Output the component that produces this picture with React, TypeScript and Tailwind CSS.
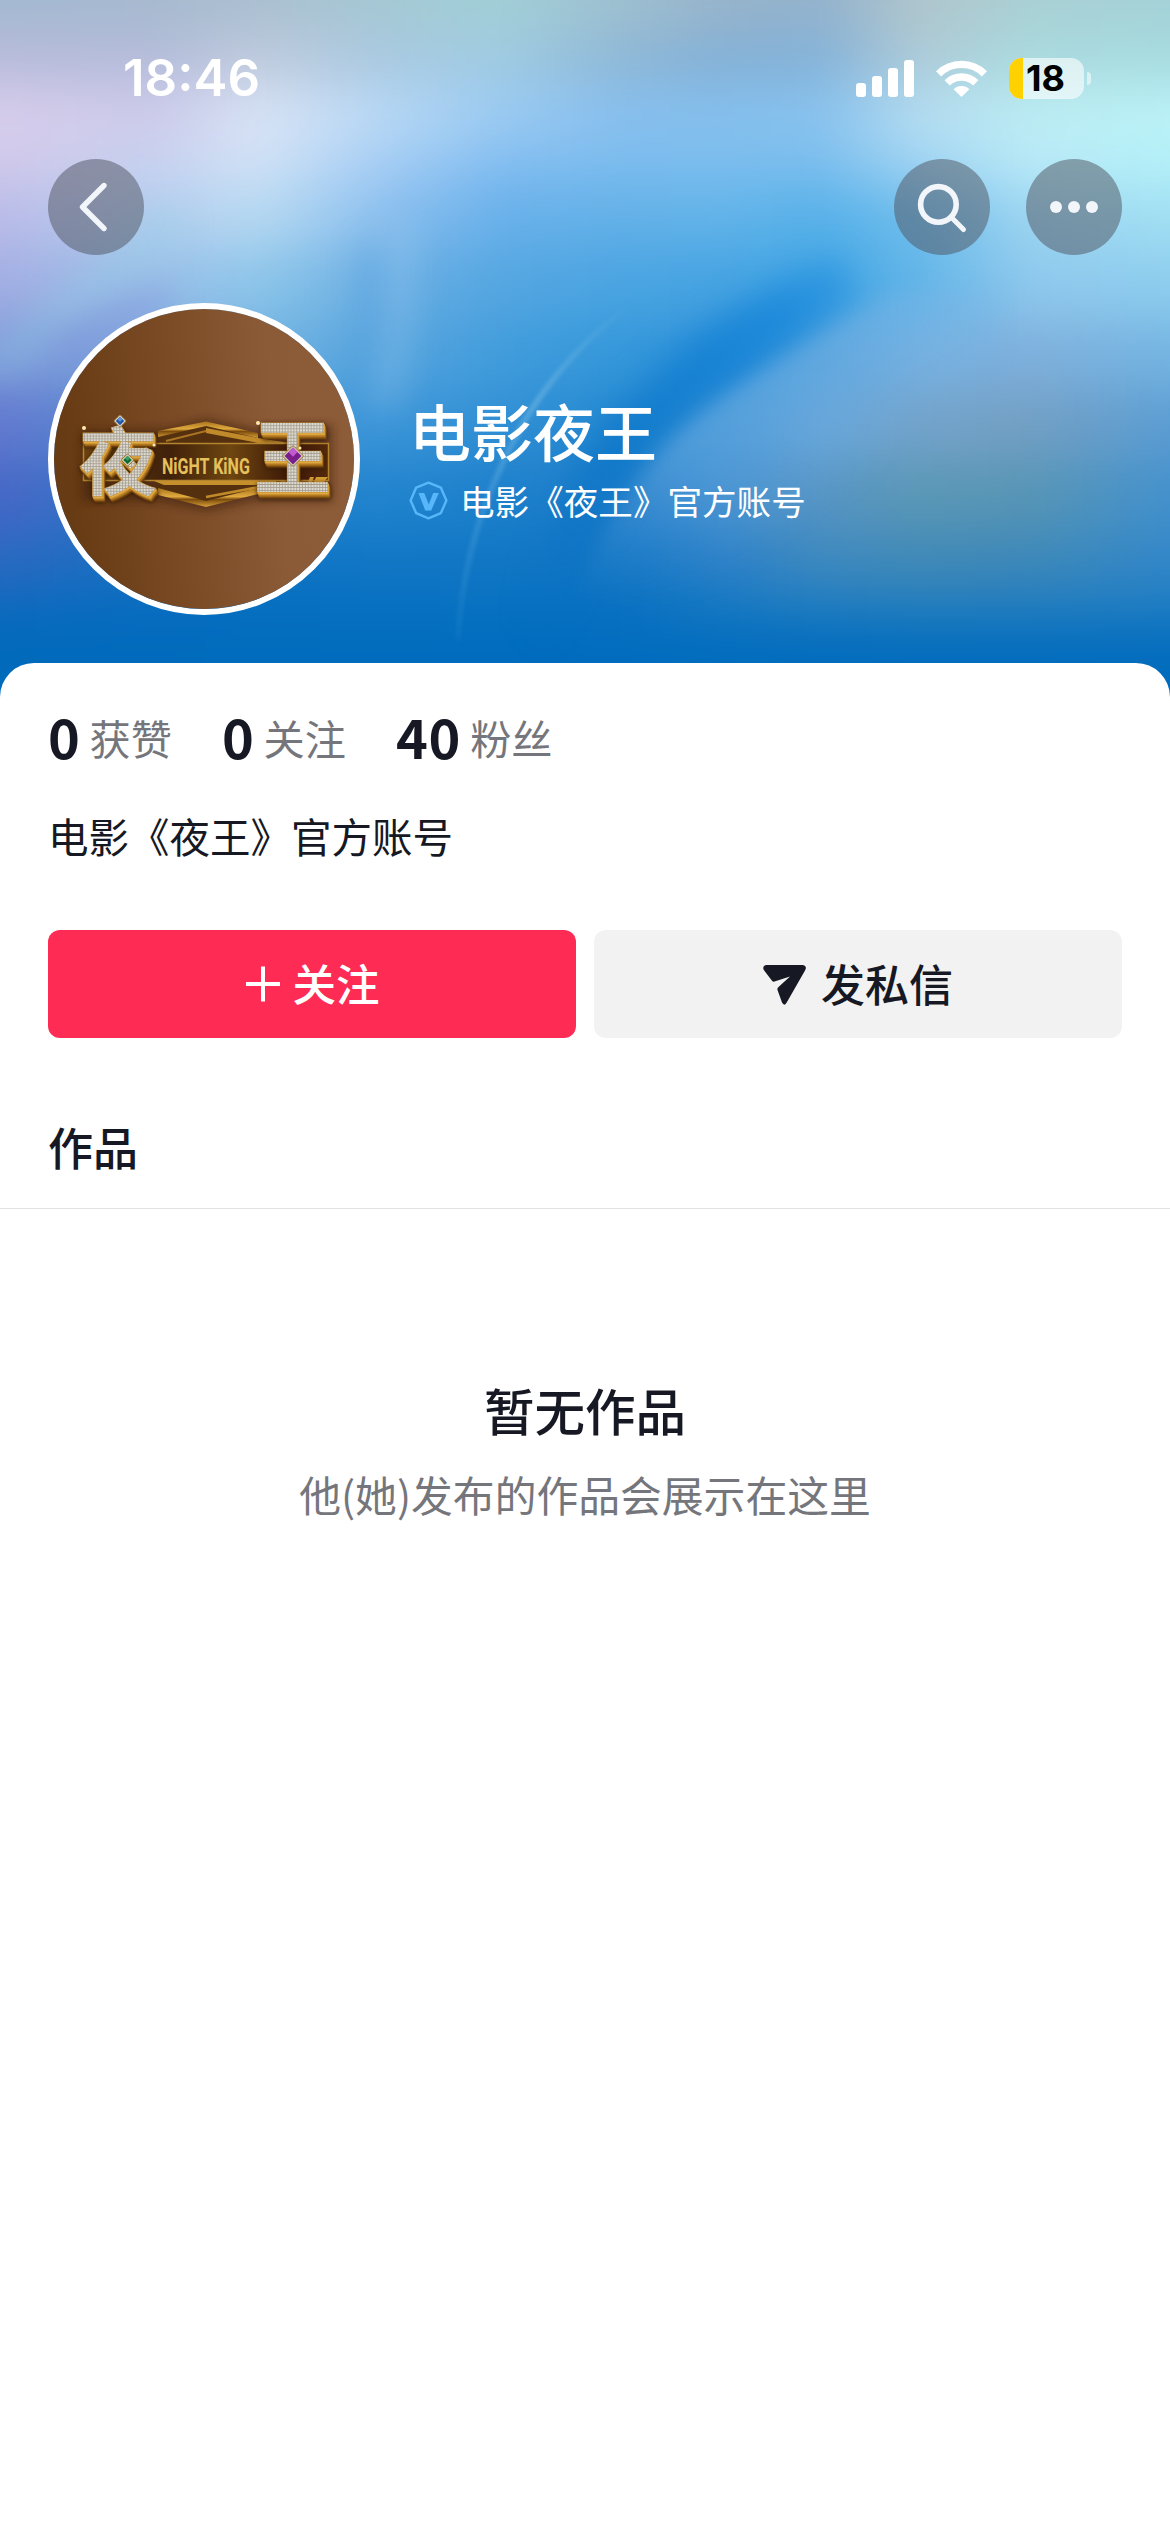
import type { ReactNode } from 'react'

type Stat = { value: string; label: string; width: string }

const STATS: Stat[] = [
  { value: '0', label: '获赞', width: 'w-[174px]' },
  { value: '0', label: '关注', width: 'w-[174px]' },
  { value: '40', label: '粉丝', width: 'w-[200px]' },
]

// Colour bands of the cover: every row is a horizontal gradient, blurred vertically into the next
const COVER_STOPS = [0, 150, 260, 380, 500, 620, 720, 820, 920, 1030, 1170]

const COVER_ROWS: { y: number; h: number; colors: string[] }[] = [
  { y: -150, h: 180, colors: ['#a3b9d2', '#a6b9cf', '#aabfd0', '#a5c8d3', '#a0cfd6', '#9fc0d0', '#98b4cb', '#93b2cc', '#b0c5cc', '#a9d0d4', '#a4d1d7'] },
  { y: 30, h: 55, colors: ['#b7bbda', '#b4bcda', '#bfcadd', '#a9c9e0', '#a0cbe2', '#8fb8d6', '#84b0d6', '#84b2d8', '#aecbd8', '#a9dade', '#a6dbe0'] },
  { y: 85, h: 60, colors: ['#d8cdec', '#cdcaea', '#d8e3f5', '#b8d8f5', '#9acaf2', '#87bfee', '#84bfed', '#88c2ee', '#b4dcf1', '#bcecf3', '#bbf2f7'] },
  { y: 145, h: 45, colors: ['#cfc8ea', '#c6d2f0', '#cfe2f6', '#a4ccf4', '#80bcf0', '#7abcee', '#7abdee', '#78bdee', '#9fd3f3', '#b8e9f8', '#b3f0f8'] },
  { y: 190, h: 60, colors: ['#b9bbe8', '#b3cdee', '#b4d8f1', '#8bbfee', '#68b0ea', '#62b0e8', '#61b3e9', '#55b0e8', '#6dbdec', '#9dd4f0', '#a0dff3'] },
  { y: 250, h: 70, colors: ['#a2aee3', '#99bfe8', '#8cc5e9', '#6aaee3', '#54a6e1', '#4aa4e1', '#45a3e1', '#42a5e4', '#62b5e8', '#8fc8ed', '#8ecdee'] },
  { y: 320, h: 70, colors: ['#7f99da', '#7aa6dd', '#6db0e0', '#57a5de', '#419cdb', '#3497da', '#2f92da', '#55a2dc', '#76b1e1', '#7fb0dc', '#74b4e2'] },
  { y: 390, h: 70, colors: ['#6279cf', '#5189d0', '#4596d6', '#3b95d8', '#318fd4', '#2388d1', '#3e93d5', '#65a5d9', '#74a3ca', '#739fc3', '#5b9dd3'] },
  { y: 460, h: 70, colors: ['#4667c6', '#2f78c8', '#2480cb', '#2284ce', '#1d80cb', '#1f7dca', '#4390d1', '#5795c4', '#5b97b5', '#5795b5', '#4391cd'] },
  { y: 530, h: 60, colors: ['#2a69c1', '#1670c1', '#0e74c4', '#1177c5', '#1177c5', '#1376c5', '#2c81c8', '#3d89bf', '#4089b7', '#3d88b9', '#3287c8'] },
  { y: 590, h: 45, colors: ['#0a6abd', '#066cbf', '#056ebf', '#066fc0', '#0670c0', '#0870c1', '#1176c1', '#1979c0', '#1c7abe', '#1c7abf', '#197ac2'] },
  { y: 635, h: 250, colors: ['#006abb', '#006abb', '#006bbc', '#006bbc', '#006bbd', '#006bbd', '#006bbd', '#006bbd', '#006bbd', '#006bbd', '#006bbd'] },
]

function Cover() {
  return (
    <svg
      className="absolute left-0 top-0 h-[720px] w-[1170px]"
      viewBox="0 0 1170 720"
      preserveAspectRatio="none"
      aria-hidden="true"
    >
      <defs>
        {COVER_ROWS.map((row, i) => (
          <linearGradient key={row.y} id={`row-${i}`} x1="0" x2="1170" y1="0" y2="0" gradientUnits="userSpaceOnUse">
            {row.colors.map((color, j) => (
              <stop key={j} offset={COVER_STOPS[j] / 1170} stopColor={color} />
            ))}
          </linearGradient>
        ))}
        <filter id="rows-blur" x="-200" y="-200" width="1570" height="1120" filterUnits="userSpaceOnUse" colorInterpolationFilters="sRGB">
          <feGaussianBlur stdDeviation="20 24" />
        </filter>
        <filter id="soft" x="-200" y="-200" width="1600" height="1200" filterUnits="userSpaceOnUse" colorInterpolationFilters="sRGB">
          <feGaussianBlur stdDeviation="16" />
        </filter>
        <filter id="edge" x="-200" y="-200" width="1600" height="1200" filterUnits="userSpaceOnUse" colorInterpolationFilters="sRGB">
          <feGaussianBlur stdDeviation="9" />
        </filter>
        <filter id="streak" x="-200" y="-200" width="1600" height="1200" filterUnits="userSpaceOnUse" colorInterpolationFilters="sRGB">
          <feGaussianBlur stdDeviation="2" />
        </filter>
        <linearGradient id="band" x1="850" y1="240" x2="530" y2="640" gradientUnits="userSpaceOnUse">
          <stop offset="0" stopColor="#2390e0" stopOpacity="0.3" />
          <stop offset="0.2" stopColor="#1a88da" stopOpacity="0.9" />
          <stop offset="0.6" stopColor="#0c76c8" stopOpacity="0.85" />
          <stop offset="1" stopColor="#006bbd" stopOpacity="0" />
        </linearGradient>
        <linearGradient id="lobe" x1="700" y1="420" x2="800" y2="540" gradientUnits="userSpaceOnUse">
          <stop offset="0" stopColor="#79b4e6" stopOpacity="0.42" />
          <stop offset="1" stopColor="#79b4e6" stopOpacity="0" />
        </linearGradient>
        <linearGradient id="lobe-fade" x1="0" y1="440" x2="0" y2="610" gradientUnits="userSpaceOnUse">
          <stop offset="0" stopColor="#fff" />
          <stop offset="1" stopColor="#fff" stopOpacity="0" />
        </linearGradient>
        <mask id="lobe-mask" maskUnits="userSpaceOnUse" x="0" y="0" width="1170" height="720">
          <rect width="1170" height="720" fill="url(#lobe-fade)" />
        </mask>
        <linearGradient id="ray" x1="630" y1="300" x2="460" y2="640" gradientUnits="userSpaceOnUse">
          <stop offset="0" stopColor="#7fc0e6" stopOpacity="0" />
          <stop offset="0.35" stopColor="#7fc0e6" stopOpacity="0.55" />
          <stop offset="1" stopColor="#5fb0e6" stopOpacity="0.1" />
        </linearGradient>
      </defs>
      <g filter="url(#rows-blur)">
        {COVER_ROWS.map((row, i) => (
          <rect key={row.y} x="-150" y={row.y} width="1470" height={row.h} fill={`url(#row-${i})`} />
        ))}
      </g>
      <path
        d="M840 255C765 285 695 330 640 390C575 455 540 540 520 650L550 650C570 570 600 510 650 450C710 395 790 350 860 295Z"
        fill="url(#band)"
        filter="url(#soft)"
      />
      <g mask="url(#lobe-mask)">
        <path
          d="M900 290C800 350 720 390 668 445C615 505 580 570 565 650L1000 650L1000 290Z"
          fill="url(#lobe)"
          filter="url(#edge)"
        />
      </g>
      <path
        d="M630 305C590 335 555 370 525 420C485 490 462 560 458 640"
        fill="none"
        stroke="url(#ray)"
        strokeWidth="5"
        filter="url(#streak)"
      />
      <g filter="url(#soft)" fill="none" strokeLinecap="round">
        <path d="M370 250C370 300 364 350 350 390" stroke="#3f93da" strokeOpacity="0.35" strokeWidth="16" />
        <path d="M402 240C404 300 398 350 386 400" stroke="#b0d4f2" strokeOpacity="0.25" strokeWidth="28" />
        <path d="M0 360C60 320 120 270 165 225" stroke="#8fd0e6" strokeOpacity="0.3" strokeWidth="36" />
        <path d="M60 350C90 328 120 310 160 300" stroke="#7d86d8" strokeOpacity="0.4" strokeWidth="26" />
      </g>
    </svg>
  )
}

function StatusBar() {
  return (
    <div className="flex h-[159px] items-start justify-between pl-[123px] pr-[79px] pt-[48px]">
      <span className="font-['Inter',sans-serif] text-[51px] font-semibold leading-[60px] text-white">
        18:46
      </span>
      <div className="flex h-[60px] items-center">
        <svg className="h-[37px] w-[58px]" viewBox="0 0 58 37" fill="#fff" aria-hidden="true">
          <rect x="0" y="23" width="10" height="14" rx="3" />
          <rect x="16" y="16" width="10" height="21" rx="3" />
          <rect x="32" y="8" width="10" height="29" rx="3" />
          <rect x="48" y="0" width="10" height="37" rx="3" />
        </svg>
        <svg className="ml-[22px] h-[37px] w-[51px]" viewBox="0 0 51 37" aria-hidden="true">
          <g fill="none" stroke="#fff" strokeWidth="7.4">
            <path d="M2.6 13.8a32.5 32.5 0 0 1 45.8 0" />
            <path d="M11.2 22.8a20.6 20.6 0 0 1 28.6 0" />
          </g>
          <path d="M25.5 37L17.6 29.2a11.4 11.4 0 0 1 15.8 0Z" fill="#fff" />
        </svg>
        <div className="ml-[22px] flex h-[41px] w-[75px] items-center overflow-hidden rounded-[13px] bg-white/60">
          <div className="h-full w-[14px] bg-[#ffd100]" />
          <span className="ml-[3px] font-['Inter',sans-serif] text-[36px] font-bold leading-none text-black">
            18
          </span>
        </div>
        <div className="ml-[3px] h-[13px] w-[4px] rounded-r-full bg-white/55" />
      </div>
    </div>
  )
}

function RoundButton({ label, children }: { label: string; children: ReactNode }) {
  return (
    <button
      type="button"
      aria-label={label}
      className="flex size-24 items-center justify-center rounded-full bg-[#4e525e]/50"
    >
      <svg className="size-24" viewBox="0 0 96 96" fill="none" stroke="#f2f5fa" strokeLinecap="round" strokeLinejoin="round">
        {children}
      </svg>
    </button>
  )
}

function NavBar() {
  return (
    <nav className="flex items-center justify-between px-12">
      <RoundButton label="返回">
        <path d="M56 26.5L34.5 48L56 69.5" strokeWidth="5.4" />
      </RoundButton>
      <div className="flex gap-9">
        <RoundButton label="搜索">
          <circle cx="44.4" cy="45.4" r="17.8" strokeWidth="5.6" />
          <path d="M57.5 58.5L69.5 70.5" strokeWidth="5" />
        </RoundButton>
        <RoundButton label="更多">
          <g fill="#f2f5fa" stroke="none">
            <circle cx="30" cy="48" r="6" />
            <circle cx="48" cy="48" r="6" />
            <circle cx="66" cy="48" r="6" />
          </g>
        </RoundButton>
      </div>
    </nav>
  )
}

function Gem({ x, y, r, fill, light }: { x: number; y: number; r: number; fill: string; light: string }) {
  return (
    <g transform={`translate(${x} ${y}) rotate(45)`}>
      <rect x={-r} y={-r} width={r * 2} height={r * 2} rx="1" fill="#d9d2bd" stroke="#8d6420" strokeWidth="0.8" />
      <rect x={-r + 1.5} y={-r + 1.5} width={r * 2 - 3} height={r * 2 - 3} fill={fill} />
      <rect x={-r + 1.5} y={-r + 1.5} width={r - 1} height={r - 1} fill={light} />
    </g>
  )
}

// Studded silver face, the extrude filter adds the gold sides and the shadow
function LogoGlyph({ char, transform }: { char: string; transform: string }) {
  return (
    <text
      transform={transform}
      fontFamily="'Noto Sans CJK SC', sans-serif"
      fontWeight="700"
      fontSize="80"
      fill="url(#studs)"
      stroke="#c48f35"
      strokeWidth="1.2"
      paintOrder="stroke"
      filter="url(#extrude)"
    >
      {char}
    </text>
  )
}

function Avatar() {
  return (
    <div className="size-[312px] shrink-0 overflow-hidden rounded-full border-[6px] border-white">
      <svg className="size-full" viewBox="0 0 300 300" role="img" aria-label="夜王 Night King">
        <defs>
          <linearGradient id="wood" x1="0" y1="0.1" x2="1" y2="0">
            <stop offset="0" stopColor="#673b13" />
            <stop offset="0.35" stopColor="#7a4a25" />
            <stop offset="0.7" stopColor="#8b5a36" />
            <stop offset="1" stopColor="#8d5c38" />
          </linearGradient>
          <linearGradient id="gold" x1="0" y1="0" x2="0" y2="1">
            <stop offset="0" stopColor="#a8731c" />
            <stop offset="0.45" stopColor="#e0a93f" />
            <stop offset="0.6" stopColor="#7c4c0c" />
            <stop offset="1" stopColor="#d8a03a" />
          </linearGradient>
          <linearGradient id="plate" x1="0" y1="0" x2="1" y2="0">
            <stop offset="0" stopColor="#6b4312" />
            <stop offset="0.35" stopColor="#40210a" />
            <stop offset="0.6" stopColor="#6e4610" />
            <stop offset="0.85" stopColor="#3b1708" />
            <stop offset="1" stopColor="#552a0c" />
          </linearGradient>
          <pattern id="studs" width="3" height="3" patternUnits="userSpaceOnUse">
            <rect width="3" height="3" fill="#a39b8c" />
            <rect width="2.2" height="2.2" fill="#dedbd2" />
          </pattern>
          <filter id="logo-shadow" x="-10%" y="-20%" width="120%" height="140%">
            <feGaussianBlur stdDeviation="5" />
          </filter>
          <filter id="extrude" x="-20%" y="-20%" width="140%" height="140%" colorInterpolationFilters="sRGB">
            <feDropShadow dx="0.8" dy="1.8" stdDeviation="0" floodColor="#e3ac45" />
            <feDropShadow dx="1" dy="2.2" stdDeviation="0" floodColor="#b47a1f" />
            <feDropShadow dx="0.8" dy="1.8" stdDeviation="0" floodColor="#7a4a10" />
            <feDropShadow dx="0" dy="1" stdDeviation="2" floodColor="#2c1404" floodOpacity="0.8" />
          </filter>
        </defs>
        <rect width="300" height="300" fill="url(#wood)" />
        <path d="M28 122L110 120L152 110L200 120L278 116V192H200L152 202L105 192H28Z" fill="#3a1c08" opacity="0.55" filter="url(#logo-shadow)" />

        <path d="M104 124L152 113L206 127L236 136H100Z" fill="#54300f" />
        <path d="M104 182L152 198L206 182L236 172H100Z" fill="#54300f" />
        <path d="M104 122L152 112.5L204 124V129L152 117L104 128Z" fill="url(#gold)" />
        <path d="M152 119L204 129L236 134V136H215L152 124Z" fill="#c08a2a" />
        <path d="M152 122L112 132" stroke="#a87424" strokeWidth="2" />
        <path d="M104 179L152 192L204 179V185L152 198L104 186Z" fill="url(#gold)" />
        <path d="M152 188L232 173" stroke="#c08a2a" strokeWidth="2.5" />
        <rect x="29.5" y="134.5" width="245" height="37" fill="url(#plate)" stroke="#b5842f" strokeWidth="1.5" />
        <path d="M100 172H222V176H110Z" fill="#c58f2c" />
        <path d="M256 168L260 168L258 173H254ZM262 168H274L270 173H260Z" fill="#d29c35" />

        <text
          transform="translate(108 165) scale(0.73 1)"
          fontFamily="'Roboto', sans-serif"
          fontWeight="700"
          fontSize="22"
          fill="#e6c05a"
        >
          NiGHT KiNG
        </text>

        <LogoGlyph char="夜" transform="translate(25 180) scale(0.98 0.92)" />
        <LogoGlyph char="王" transform="translate(200 179) scale(0.96 1.03)" />

        <Gem x={66} y={112} r={4.5} fill="#2457a8" light="#5b93e0" />
        <Gem x={73.5} y={151} r={4.5} fill="#0f6b34" light="#39a35c" />
        <Gem x={239} y={147} r={7.5} fill="#7a1e8c" light="#c25bd0" />
        <g fill="#ffe9b0">
          <circle cx="30" cy="119" r="2" />
          <circle cx="204" cy="114" r="2" />
          <circle cx="246" cy="139" r="1.5" />
          <circle cx="100" cy="136" r="1.5" />
        </g>
      </svg>
    </div>
  )
}

function VerifiedBadge() {
  return (
    <svg className="size-[39px]" viewBox="0 0 39 39" fill="none" aria-hidden="true">
      <path
        d="M19.5 1.6L31.8 6.6L37.4 19.5L31.8 32.2L19.5 37.4L7.2 32.2L1.6 19.5L7.2 6.6Z"
        stroke="#58b7fb"
        strokeWidth="2.4"
        strokeLinejoin="round"
      />
      <path d="M9.5 12H15.2L20 24L18 29.5H16.3Z" fill="#58b7fb" />
      <path d="M24.2 12H29.8L22.2 29.5H17.5L20.5 21.5Z" fill="#58b7fb" />
    </svg>
  )
}

function Profile() {
  return (
    <div className="mt-12 flex px-12">
      <Avatar />
      <div className="ml-[49px] pt-[89px] text-white">
        <h1 className="text-[62px] font-medium leading-[76px]">电影夜王</h1>
        <div className="mt-[7px] flex h-[50px] items-center">
          <VerifiedBadge />
          <span className="ml-[12px] text-[34.6px] leading-[50px]">电影《夜王》官方账号</span>
        </div>
      </div>
    </div>
  )
}

export default function App() {
  return (
    <div className="relative min-h-[2532px] w-[1170px] overflow-hidden bg-white font-['Noto_Sans_CJK_SC',sans-serif] text-[#161823]">
      <Cover />
      <div className="relative">
        <header className="h-[663px]">
          <StatusBar />
          <NavBar />
          <Profile />
        </header>

        <main className="rounded-t-[34px] bg-white pt-[44px]">
          <div className="flex h-[60px] px-12">
            {STATS.map((s) => (
              <div key={s.label} className={`flex items-center ${s.width}`}>
                <span className="pb-[2px] text-[54px] font-bold leading-[60px] tracking-[0.7px]">{s.value}</span>
                <span className="ml-[9px] text-[41.2px] leading-[60px] text-[#75767b]">{s.label}</span>
              </div>
            ))}
          </div>
          <p className="mt-[41px] px-12 text-[40.5px] leading-[56px]">电影《夜王》官方账号</p>

          <div className="mt-[66px] flex gap-[18px] px-12">
            <button
              type="button"
              className="flex h-[108px] flex-1 items-center justify-center rounded-xl bg-[#fe2c55] text-[43.5px] font-medium text-white"
            >
              <svg className="mr-[12px] size-[36px]" viewBox="0 0 36 36" stroke="#fff" strokeWidth="4" aria-hidden="true">
                <path d="M18 0.5V35.5M1 18H35" />
              </svg>
              <span className="pb-[3px]">关注</span>
            </button>
            <button
              type="button"
              className="flex h-[108px] flex-1 items-center justify-center rounded-xl bg-[#f2f2f2] text-[44px] font-medium"
            >
              <svg className="mr-[15px] mt-[3px] h-[41px] w-[43px]" viewBox="0 0 43 41" fill="#161823" aria-hidden="true">
                <path d="M3 0H40Q44.5 1 42 5.5L24 37Q21.5 42 19 37.5L14.5 25Q14 23 15.5 22L27 11.5L11.5 16.5Q10 17 9 15.8L0.8 5Q-1 1 3 0Z" />
              </svg>
              <span className="pb-[3px]">发私信</span>
            </button>
          </div>

          <div className="mt-[79px] border-b border-[#e1e1e2] px-12 pb-[31px]">
            <h2 className="text-[45px] font-medium leading-[60px]">作品</h2>
          </div>

          <section className="pt-[164px] text-center">
            <p className="text-[50.5px] font-medium leading-[72px]">暂无作品</p>
            <p className="mt-[21px] text-[41.8px] leading-[56px] text-[#75767b]">他(她)发布的作品会展示在这里</p>
          </section>
        </main>
      </div>
    </div>
  )
}
